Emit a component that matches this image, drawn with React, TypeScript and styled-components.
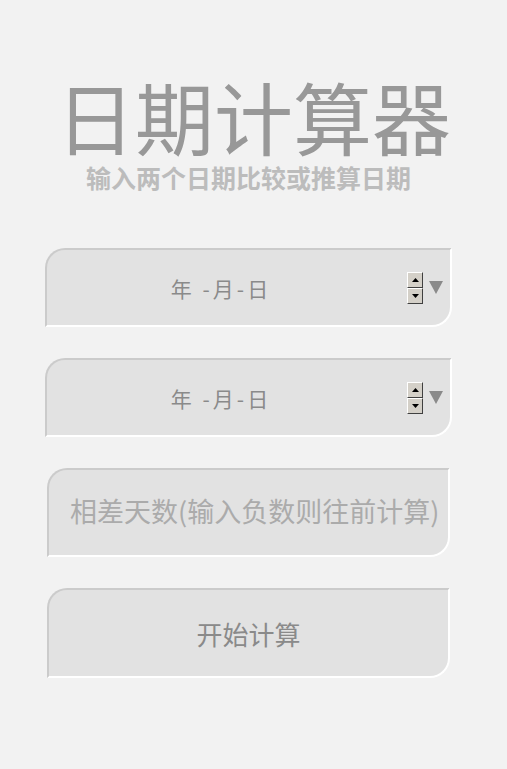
import React from 'react';
import styled, {createGlobalStyle} from 'styled-components';

const GlobalStyle = createGlobalStyle`
  html, body {
    margin: 0;
    padding: 0;
    background: #f2f2f2;
  }
  body {
    font-family: "Noto Sans CJK SC", "Liberation Sans", sans-serif;
  }
`

const Page = styled.div`
  width: 507px;
  min-height: 769px;
  display: flex;
  flex-direction: column;
  align-items: center;
`

const Header = styled.header`
  display: flex;
  flex-direction: column;
  align-items: center;
  padding-top: 74px;
`

const Title = styled.h1`
  margin: 0;
  font-size: 79px;
  line-height: 84px;
  font-weight: 400;
  color: #989898;
`

const Subtitle = styled.p`
  margin: 3px 0 0 -10px;
  font-size: 25px;
  line-height: 32px;
  font-weight: 700;
  color: #bcbcbc;
`

const Form = styled.div`
  display: flex;
  flex-direction: column;
  align-items: center;
  gap: 31px;
  width: 407px;
  margin: 55px 10px 0 0;
`

const Field = styled.div<{ $width: number, $height: number }>`
  box-sizing: border-box;
  width: ${p => p.$width}px;
  height: ${p => p.$height}px;
  background: #e2e2e2;
  border: 2px solid;
  border-color: #cbcbcb #ffffff #ffffff #cbcbcb;
  border-radius: 20px 0 20px 0;
  display: flex;
  align-items: center;
  position: relative;
`

const DateText = styled.span`
  flex: 1;
  text-align: center;
  font-size: 21px;
  color: #8a8a8a;
  padding-right: 12px;
  letter-spacing: 3px;
`

const Spinner = styled.div`
  display: flex;
  flex-direction: column;
  width: 16px;
  margin-right: 6px;
`

const SpinButton = styled.div`
  box-sizing: border-box;
  height: 16px;
  background: #d4d0c8;
  border: 1px solid;
  border-color: #ffffff #404040 #404040 #ffffff;
  display: flex;
  align-items: center;
  justify-content: center;
`

const DropArrow = styled.div`
  width: 0;
  height: 0;
  border-left: 7px solid transparent;
  border-right: 7px solid transparent;
  border-top: 13px solid #8a8a8a;
  margin-right: 7px;
`

const Placeholder = styled.span`
  flex: 1;
  text-align: left;
  padding-left: 21px;
  font-size: 27px;
  color: #ababab;
  padding-bottom: 4px;
  white-space: nowrap;
`

const ButtonText = styled.span`
  flex: 1;
  text-align: center;
  font-size: 26px;
  color: #8a8a8a;
`

const Tri = ({up}: { up?: boolean }) => (
    <svg width="7" height="4" viewBox="0 0 7 4">
        {up ? <polygon points="3.5,0 7,4 0,4" fill="#000"/> : <polygon points="0,0 7,0 3.5,4" fill="#000"/>}
    </svg>
)

const DateField = () => (
    <Field $width={407} $height={79}>
        <DateText>年 -月-日</DateText>
        <Spinner>
            <SpinButton><Tri up/></SpinButton>
            <SpinButton><Tri/></SpinButton>
        </Spinner>
        <DropArrow/>
    </Field>
)

function App() {
    return (
        <Page>
            <GlobalStyle/>
            <Header>
                <Title>日期计算器</Title>
                <Subtitle>输入两个日期比较或推算日期</Subtitle>
            </Header>
            <Form>
                <DateField/>
                <DateField/>
                <Field $width={403} $height={89}>
                    <Placeholder>相差天数(输入负数则往前计算)</Placeholder>
                </Field>
                <Field $width={403} $height={90}>
                    <ButtonText>开始计算</ButtonText>
                </Field>
            </Form>
        </Page>
    );
}

export default App;
